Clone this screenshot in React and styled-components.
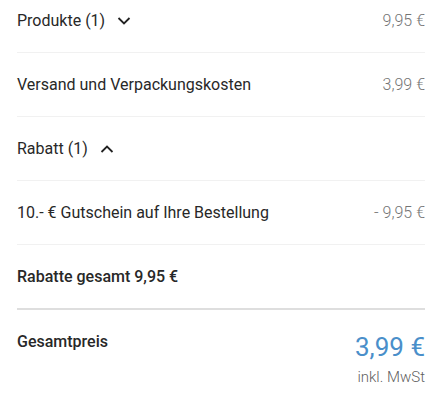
import styled, { createGlobalStyle } from "styled-components"

const Global = createGlobalStyle`
  body {
    margin: 0;
    background: #fff;
    font-family: Roboto, "Liberation Sans", sans-serif;
    color: #282828;
  }
`

const Summary = styled.section`
  margin: -11px 19px 0 17px;
`

const Row = styled.div`
  display: flex;
  justify-content: space-between;
  align-items: center;
  height: 63px;
  border-bottom: ${(p) => (p.$strong ? "2px solid #dedede" : "1px solid #f1f1f1")};
  font-size: 16px;
  font-weight: ${(p) => (p.$strong ? 500 : 400)};
`

const Label = styled.span`
  display: flex;
  align-items: center;
  gap: 12px;
`

const Price = styled.span`
  color: #747474;
  font-size: 16px;
  font-weight: 300;
`

const Total = styled.div`
  display: flex;
  justify-content: space-between;
  align-items: flex-start;
  padding-top: 22px;
`

const TotalLabel = styled.span`
  font-size: 16px;
  font-weight: 500;
  line-height: 20px;
`

const TotalRight = styled.div`
  display: flex;
  flex-direction: column;
  align-items: flex-end;
  gap: 6px;
`

const TotalPrice = styled.span`
  color: #4a8fca;
  font-size: 26px;
  line-height: 30px;
`

const Tax = styled.span`
  color: #5f5f5f;
  font-size: 15px;
  font-weight: 300;
  line-height: 18px;
`

const Chevron = ({ up }) => (
  <svg width="14" height="8" viewBox="0 0 14 8" fill="none">
    <path
      d={up ? "M1.5 7 L7 1.5 L12.5 7" : "M1.5 1 L7 6.5 L12.5 1"}
      stroke="#222"
      strokeWidth="1.8"
    />
  </svg>
)

export default function App() {
  return (
    <>
      <Global />
      <Summary>
        <Row>
          <Label>Produkte (1) <Chevron /></Label>
          <Price>9,95 €</Price>
        </Row>
        <Row>
          <Label>Versand und Verpackungskosten</Label>
          <Price>3,99 €</Price>
        </Row>
        <Row>
          <Label>Rabatt (1) <Chevron up /></Label>
        </Row>
        <Row>
          <Label>10.- € Gutschein auf Ihre Bestellung</Label>
          <Price>- 9,95 €</Price>
        </Row>
        <Row $strong>
          <Label>Rabatte gesamt 9,95 €</Label>
        </Row>
        <Total>
          <TotalLabel>Gesamtpreis</TotalLabel>
          <TotalRight>
            <TotalPrice>3,99 €</TotalPrice>
            <Tax>inkl. MwSt</Tax>
          </TotalRight>
        </Total>
      </Summary>
    </>
  )
}
